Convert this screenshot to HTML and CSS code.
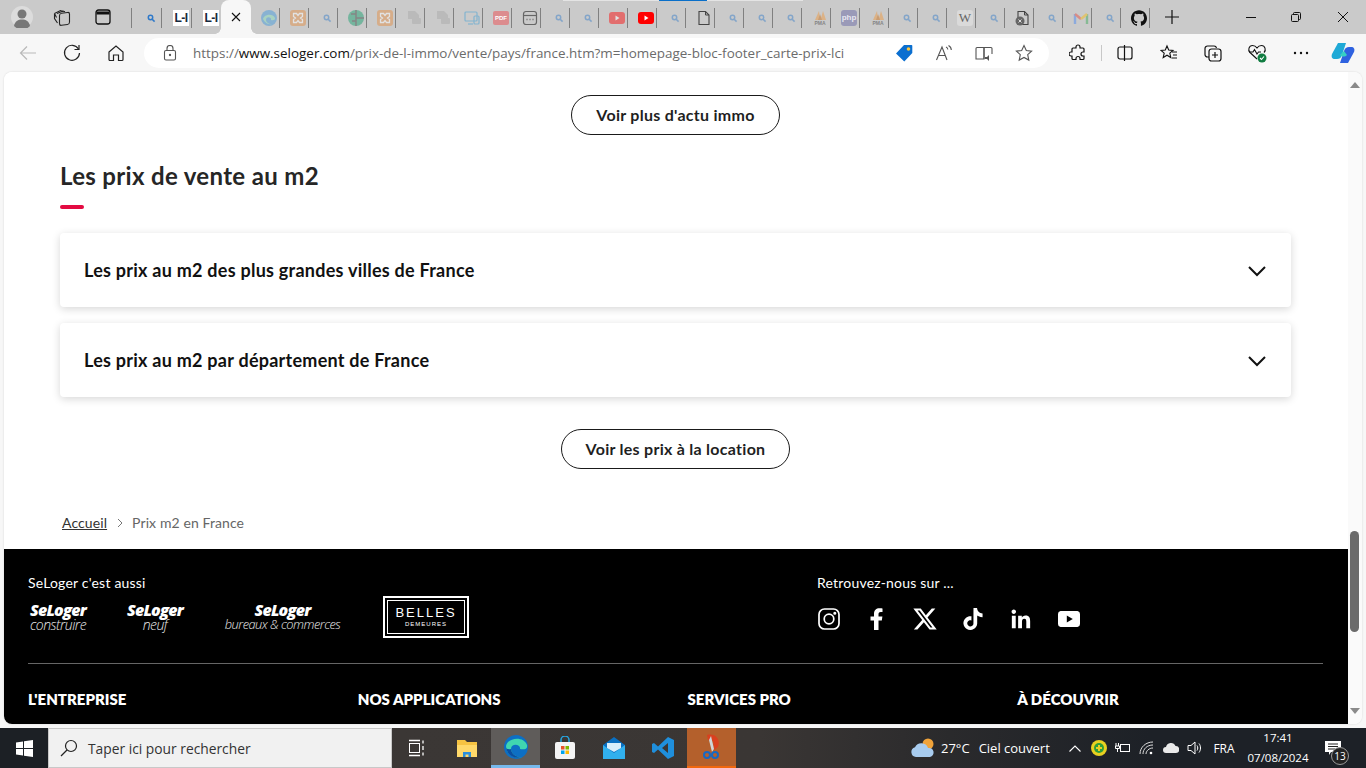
FILE: index.html
```html
<!DOCTYPE html>
<html lang="fr">
<head>
  <meta charset="UTF-8" />
  <title>Prix m2 en France</title>
  <meta name="viewport" content="width=device-width, initial-scale=1.0" />
  <link rel="stylesheet" href="styles.css">
</head>
<body>

  <svg class="defs" width="0" height="0">
    <symbol id="s" viewBox="0 0 16 16"><circle cx="7.5" cy="7.5" r="2.2" fill="none" stroke="#2f79c9" stroke-width="1.5"/><path d="M9.2 9.2l2.4 2.4" stroke="#2f79c9" stroke-width="1.6"/></symbol>
    <symbol id="xampp" viewBox="0 0 16 16"><rect width="16" height="16" rx="3" fill="#e58a3c"/><path d="M3.5 3.5h3l1.5 2 1.5-2h3v3l-2 1.5 2 1.5v3h-3L8 10.500l-1.500 2h-3v-3l2-1.500-2-1.500z" fill="none" stroke="#fff" stroke-width="1.300"/></symbol>
    <symbol id="file" viewBox="0 0 16 16"><path d="M3 1.500h6.500L13 5v9.500H3z" fill="none" stroke="#444" stroke-width="1.100"/><path d="M9.500 1.500V5H13" fill="none" stroke="#444" stroke-width="1"/></symbol>
    <symbol id="filegray" viewBox="0 0 16 16"><path d="M2 1h7l4 4v4H2z" fill="#8d8d8d"/><rect x="6" y="8" width="9" height="6" rx="1" fill="#8d8d8d"/></symbol>
    <symbol id="pma" viewBox="0 0 16 16"><path d="M3 11l4-9 1 9zM8.500 11l2.500-9 3 9z" fill="#e8a35a"/><path d="M6 11l2-6 2 6z" fill="#c9803a"/></symbol>
  </svg>

  <header class="tabbar">
    <div class="avatar">
      <svg viewBox="0 0 22 22" width="22" height="22"><circle cx="11" cy="11" r="11" fill="#dcdcdc"/><circle cx="11" cy="8" r="4.500" fill="#777"/><path d="M3 20c1-5 4-6.500 8-6.500s7 1.500 8 6.500a11 11 0 0 1-16 0z" fill="#777"/></svg>
    </div>
    <svg class="tb-workspace" viewBox="0 0 18 18" width="18" height="18" fill="none" stroke="#222" stroke-width="1.100"><path d="M1.500 5.500l6-3 3 1.200M3.500 9.500L1.500 5.500v5l3 4.500"/><path d="M4 5.500l6-2.500 2 .8"/><rect x="6.500" y="5" width="10" height="12" rx="2" transform="skewY(-8) translate(0 1.500)"/></svg>
    <svg class="tb-vertical" viewBox="0 0 18 18" width="18" height="18" fill="none" stroke="#111" stroke-width="1.300"><rect x="2" y="2" width="14" height="14" rx="2.500"/><path d="M2.500 5h13" stroke-width="3"/></svg>

    <div class="tabs">
      <div class="tab first"><svg width="16" height="16"><use href="#s"/></svg></div>
      <div class="tab first"><span class="li">L-I</span></div>
      <div class="tab first"><span class="li">L-I</span></div>
      <div class="tab-active">
        <svg viewBox="0 0 10 10" width="10" height="10" stroke="#111" stroke-width="1.100"><path d="M1 1l8 8M9 1l-8 8"/></svg>
      </div>
      <div class="tab"><svg class="faded" viewBox="0 0 16 16" width="16" height="16"><circle cx="8" cy="8" r="8" fill="#3a96dd"/><path d="M2 9c1-5 10-6 12-1 .5 2-2 2.500-4 2 1-3-5-4-5 0 0 2 3 4.500 6 4A8 8 0 0 1 2 9z" fill="#7fdcb8"/></svg></div>
      <div class="tab"><svg class="faded" width="16" height="16"><use href="#xampp"/></svg></div>
      <div class="tab"><svg class="faded" width="16" height="16"><use href="#s"/></svg></div>
      <div class="tab"><svg class="faded" viewBox="0 0 16 16" width="16" height="16"><circle cx="8" cy="8" r="8" fill="#0f9d6a"/><path d="M8 0v16M8 8h8M3 4h5M4 11h4" stroke="#333" stroke-width="1.500"/></svg></div>
      <div class="tab"><svg class="faded" width="16" height="16"><use href="#xampp"/></svg></div>
      <div class="tab"><svg class="faded light" width="16" height="16"><use href="#filegray"/></svg></div>
      <div class="tab"><svg class="faded light" width="16" height="16"><use href="#filegray"/></svg></div>
      <div class="tab"><svg class="faded" viewBox="0 0 16 16" width="16" height="16" fill="none" stroke="#2f9bd8" stroke-width="1.200"><rect x="1" y="2" width="12" height="9" rx="1"/><rect x="10" y="6" width="5" height="8" rx="1"/><path d="M4 14h5"/></svg></div>
      <div class="tab"><span class="pdf">PDF</span></div>
      <div class="tab"><svg viewBox="0 0 16 16" width="16" height="16" fill="none" stroke="#666" stroke-width="1.200"><rect x="1.500" y="1.500" width="13" height="13" rx="2.500"/><path d="M1.500 5.500h13"/><path d="M4.500 9.500h1M7.500 9.500h1M10.500 9.500h1" stroke-width="1.600"/></svg></div>
      <div class="tab"><svg class="faded" width="16" height="16"><use href="#s"/></svg></div>
      <div class="tab"><svg class="faded" width="16" height="16"><use href="#s"/></svg></div>
      <div class="tab"><svg class="faded" viewBox="0 0 16 16" width="16" height="16"><rect y="2" width="16" height="12" rx="3" fill="#f00"/><path d="M6.500 5.500v5l4-2.500z" fill="#fff"/></svg></div>
      <div class="tab"><svg viewBox="0 0 16 16" width="16" height="16"><rect y="2" width="16" height="12" rx="3" fill="#f00"/><path d="M6.500 5.500v5l4-2.500z" fill="#fff"/></svg></div>
      <div class="tab"><svg class="faded" width="16" height="16"><use href="#s"/></svg></div>
      <div class="tab"><svg width="16" height="16"><use href="#file"/></svg></div>
      <div class="tab"><svg class="faded" width="16" height="16"><use href="#s"/></svg></div>
      <div class="tab"><svg class="faded" width="16" height="16"><use href="#s"/></svg></div>
      <div class="tab"><svg class="faded" width="16" height="16"><use href="#s"/></svg></div>
      <div class="tab"><span class="pma"><svg width="16" height="11" viewBox="0 0 16 11"><use href="#pma" width="16" height="16" y="-1"/></svg><b>PMA</b></span></div>
      <div class="tab"><span class="php">php</span></div>
      <div class="tab"><span class="pma"><svg width="16" height="11" viewBox="0 0 16 11"><use href="#pma" width="16" height="16" y="-1"/></svg><b>PMA</b></span></div>
      <div class="tab"><svg class="faded" width="16" height="16"><use href="#s"/></svg></div>
      <div class="tab"><svg class="faded" width="16" height="16"><use href="#s"/></svg></div>
      <div class="tab"><span class="wiki">W</span></div>
      <div class="tab"><svg class="faded" width="16" height="16"><use href="#s"/></svg></div>
      <div class="tab"><svg viewBox="0 0 16 16" width="16" height="16"><use href="#file"/><circle cx="5" cy="11" r="4.500" fill="#666"/><path d="M3.500 9.500l3 3M6.500 9.500l-3 3" stroke="#ddd"/></svg></div>
      <div class="tab"><svg class="faded" width="16" height="16"><use href="#s"/></svg></div>
      <div class="tab"><svg class="faded" viewBox="0 0 16 16" width="16" height="16" fill="none" stroke-width="2.400"><path d="M2 14V4" stroke="#4285f4"/><path d="M14 14V4" stroke="#34a853"/><path d="M2 4l6 5" stroke="#ea4335"/><path d="M14 4L8 9" stroke="#fbbc04"/></svg></div>
      <div class="tab"><svg class="faded" width="16" height="16"><use href="#s"/></svg></div>
      <div class="tab"><svg viewBox="0 0 24 24" width="16" height="16" fill="#111"><path d="M12 .297c-6.630 0-12 5.373-12 12 0 5.303 3.438 9.800 8.205 11.385.6.113.82-.258.82-.577 0-.285-.01-1.040-.015-2.040-3.338.724-4.042-1.610-4.042-1.610C4.422 18.070 3.633 17.700 3.633 17.700c-1.087-.744.084-.729.084-.729 1.205.084 1.838 1.236 1.838 1.236 1.070 1.835 2.809 1.305 3.495.998.108-.776.417-1.305.76-1.605-2.665-.3-5.466-1.332-5.466-5.930 0-1.310.465-2.380 1.235-3.220-.135-.303-.54-1.523.105-3.176 0 0 1.005-.322 3.300 1.230.96-.267 1.980-.399 3-.405 1.020.006 2.040.138 3 .405 2.280-1.552 3.285-1.230 3.285-1.230.645 1.653.24 2.873.12 3.176.765.84 1.230 1.910 1.230 3.220 0 4.610-2.805 5.625-5.475 5.920.42.36.81 1.096.81 2.220 0 1.606-.015 2.896-.03 3.286 0 .315.21.69.825.57C20.565 22.092 24 17.592 24 12.297c0-6.627-5.373-12-12-12"/></svg></div>
    </div>

    <svg class="tb-new" viewBox="0 0 14 14" width="14" height="14" stroke="#111" stroke-width="1.200"><path d="M7 0v14M0 7h14"/></svg>

    <div class="winctl">
      <svg viewBox="0 0 10 10" width="10" height="10" stroke="#111"><path d="M0 5.500h10"/></svg>
      <svg viewBox="0 0 10 10" width="10" height="10" fill="none" stroke="#111"><rect x=".5" y="2.500" width="7" height="7" rx="1"/><path d="M2.500 2.500V1.500a1 1 0 0 1 1-1h5a1 1 0 0 1 1 1v5a1 1 0 0 1-1 1h-1"/></svg>
      <svg viewBox="0 0 10 10" width="10" height="10" stroke="#111"><path d="M0 0l10 10M10 0L0 10"/></svg>
    </div>
    <div class="loadstrip"><span></span></div>
  </header>

  <nav class="toolbar">
    <button class="tool back"><svg viewBox="0 0 18 18" width="18" height="18" fill="none" stroke="#b9b9b9" stroke-width="1.200"><path d="M17 9H1.500M8 2.500L1.500 9 8 15.500"/></svg></button>
    <button class="tool"><svg viewBox="0 0 18 18" width="18" height="18" fill="none" stroke="#222" stroke-width="1.200"><path d="M15.500 5A7.500 7.500 0 1 0 16.500 9"/><path d="M16 1v4.500h-4.500"/></svg></button>
    <button class="tool"><svg viewBox="0 0 18 18" width="18" height="18" fill="none" stroke="#222" stroke-width="1.200"><path d="M2 8l7-6 7 6v7.500a1 1 0 0 1-1 1h-3.500V11h-5v5.500H3a1 1 0 0 1-1-1z"/></svg></button>

    <div class="address">
      <svg class="lock" viewBox="0 0 14 16" width="14" height="16" fill="none" stroke="#555" stroke-width="1.100"><rect x="1.500" y="5.500" width="11" height="9.500" rx="1.500"/><path d="M4 5.500V3.500a3 3 0 0 1 6 0v2"/><circle cx="7" cy="10" r=".6" fill="#555"/></svg>
      <div class="url">https://<span class="host">www.seloger.com</span>/prix-de-l-immo/vente/pays/france.htm?m=homepage-bloc-footer_carte-prix-lci</div>
      <div class="addr-icons">
        <svg viewBox="0 0 18 18" width="18" height="18"><path d="M9 1h7.500a.8.800 0 0 1 .8.800V9l-8 8.500L1 9.500z" fill="#0b6fd0"/><circle cx="13.500" cy="5" r="1.800" fill="#ffc83d"/></svg>
        <svg viewBox="0 0 18 18" width="18" height="18" fill="none" stroke="#555" stroke-width="1.100"><path d="M1.500 16L7 3l5 13M3.500 11.500h7"/><path d="M11 3c1.300.5 1.800 1.500 1.800 2.500M13.500 1.500c1.800 1 2.800 2.500 2.800 4.500"/></svg>
        <svg viewBox="0 0 18 18" width="18" height="18" fill="none" stroke="#555" stroke-width="1.100"><path d="M9 3.500H2a1 1 0 0 0-1 1V15h8zM9 3.500h7a1 1 0 0 1 1 1V10"/><path d="M9 4v11"/><path d="M10 13h2l2-2v6l-2-2h-2z" fill="#555" stroke="none"/></svg>
        <svg viewBox="0 0 18 18" width="18" height="18" fill="none" stroke="#555" stroke-width="1.100"><path d="M9 1.500l2.300 5 5.300.6-3.900 3.600 1.100 5.400L9 13.400l-4.800 2.700 1.100-5.400L1.400 7.100l5.300-.6z"/></svg>
      </div>
    </div>

    <div class="tools-right">
      <svg viewBox="0 0 18 18" width="18" height="18" fill="none" stroke="#111" stroke-width="1.200"><path d="M7 3a2 2 0 0 1 4 0v1h3a1 1 0 0 1 1 1v3h-1a2 2 0 0 0 0 4h1v2.500a1 1 0 0 1-1 1h-3v-1a2 2 0 0 0-4 0v1H4a1 1 0 0 1-1-1V12H2a2 2 0 0 1 0-4h1V5a1 1 0 0 1 1-1h3z"/></svg>
      <span class="tool-sep"></span>
      <svg viewBox="0 0 18 18" width="18" height="18" fill="none" stroke="#111" stroke-width="1.200"><rect x="2" y="3" width="14" height="12" rx="2"/><path d="M8.500 1v16"/></svg>
      <svg viewBox="0 0 18 18" width="18" height="18" fill="none" stroke="#111" stroke-width="1.100"><path d="M7 2l1.700 4 4.300.4-3.200 2.800 1 4.300L7 11.200l-3.800 2.300 1-4.300L1 6.400 5.300 6z"/><path d="M12 8h5M13 11h4M12 14h5"/></svg>
      <svg viewBox="0 0 18 18" width="18" height="18" fill="none" stroke="#111" stroke-width="1.200"><path d="M5 13H3.500A2.500 2.500 0 0 1 1 10.500v-6A2.500 2.500 0 0 1 3.500 2H10a2.500 2.500 0 0 1 2.500 2"/><rect x="5" y="5" width="12" height="12" rx="2.500"/><path d="M11 8v6M8 11h6"/></svg>
      <svg viewBox="0 0 20 20" width="20" height="20" fill="none"><path d="M10 16L3 9.500C.5 7 2 2.500 5.500 2.500 7.500 2.500 9 3.500 10 5c1-1.500 2.500-2.500 4.500-2.500C18 2.500 19.500 7 17 9.500" stroke="#111" stroke-width="1.100"/><path d="M2 9h4l1.500-2.500L10 11l1.500-2H14" stroke="#111" stroke-width="1.100"/><circle cx="15" cy="15" r="4.500" fill="#107c41"/><path d="M13 15l1.500 1.500 2.500-3" stroke="#fff" stroke-width="1.100"/></svg>
      <svg viewBox="0 0 18 18" width="18" height="18" fill="#111"><circle cx="3" cy="9" r="1.200"/><circle cx="9" cy="9" r="1.200"/><circle cx="15" cy="9" r="1.200"/></svg>
    </div>
    <svg class="copilot" viewBox="0 0 24 24" width="24" height="24"><path d="M7 2h8l-4 12c-1 3-2.500 4-5 4H4C1 18 0 16 1 13z" fill="#1fa9d6"/><path d="M17 22H9l4-12c1-3 2.500-4 5-4h2c3 0 4 2 3 5z" fill="#2f62e0"/><path d="M9 14l4-4 3 4c-2 2-5 2-7 0z" fill="#36d1c4"/></svg>
  </nav>

  <div class="viewport">
    <div class="frame">
      <main class="page">
        <section class="content">
          <div class="btn-row top"><a class="btn actu">Voir plus d'actu immo</a></div>

          <h2 class="title">Les prix de vente au m2</h2>
          <div class="title-bar"></div>

          <div class="card">
            <span>Les prix au m2 des plus grandes villes de France</span>
            <svg viewBox="0 0 18 11" width="18" height="11" fill="none" stroke="#111" stroke-width="2"><path d="M1 1l8 8 8-8"/></svg>
          </div>
          <div class="card">
            <span>Les prix au m2 par département de France</span>
            <svg viewBox="0 0 18 11" width="18" height="11" fill="none" stroke="#111" stroke-width="2"><path d="M1 1l8 8 8-8"/></svg>
          </div>

          <div class="btn-row bottom"><a class="btn loc">Voir les prix à la location</a></div>

          <div class="crumbs">
            <a>Accueil</a>
            <svg viewBox="0 0 6 10" width="6" height="10" fill="none" stroke="#777"><path d="M1 1l4 4-4 4"/></svg>
            <span>Prix m2 en France</span>
          </div>
        </section>

        <footer class="site-footer">
          <div class="foot-top">
            <div>
              <p class="foot-label">SeLoger c'est aussi</p>
              <div class="brands">
                <div class="brand b1"><b>SeLoger</b><i>construire</i></div>
                <div class="brand b2"><b>SeLoger</b><i>neuf</i></div>
                <div class="brand b3"><b>SeLoger</b><i>bureaux &amp; commerces</i></div>
                <div class="belles"><div class="belles-in"><span class="b-big">BELLES</span><span class="b-small">DEMEURES</span></div></div>
              </div>
            </div>
            <div>
              <p class="foot-label">Retrouvez-nous sur ...</p>
              <div class="socials">
                <svg viewBox="0 0 24 24" width="24" height="24" fill="none" stroke="#fff" stroke-width="1.700"><rect x="2" y="2" width="20" height="20" rx="5.500"/><circle cx="12" cy="12" r="4.800"/><circle cx="17.800" cy="6.200" r=".7" fill="#fff"/></svg>
                <svg viewBox="0 0 24 24" width="24" height="24" fill="#fff"><path d="M9 23v-9.500H5.500V9.500H9V7c0-3.800 2.200-5.800 5.500-5.800 1.500 0 3 .2 3 .2v3.500h-1.800c-1.800 0-2.200 1.100-2.200 2.200v2.400h3.900l-.6 4h-3.300V23z"/></svg>
                <svg viewBox="0 0 24 24" width="26" height="26" fill="#fff"><path d="M18.244 2.250h3.308l-7.227 8.260 8.502 11.240H16.170l-5.214-6.817L4.990 21.750H1.680l7.730-8.835L1.254 2.250H8.080l4.713 6.231zm-1.161 17.520h1.833L7.084 4.126H5.117z"/></svg>
                <svg viewBox="0 0 24 24" width="22" height="24" fill="#fff"><path d="M12.525.02c1.310-.02 2.610-.01 3.910-.02.08 1.530.63 3.090 1.750 4.170 1.120 1.110 2.700 1.620 4.240 1.790v4.030c-1.440-.05-2.890-.35-4.200-.97-.57-.26-1.100-.59-1.620-.93-.01 2.920.01 5.840-.02 8.750-.08 1.400-.54 2.790-1.350 3.940-1.310 1.920-3.580 3.170-5.910 3.210-1.430.08-2.860-.31-4.080-1.030-2.020-1.190-3.440-3.370-3.650-5.710-.02-.5-.03-1-.01-1.490.18-1.900 1.120-3.720 2.580-4.960 1.660-1.440 3.980-2.130 6.150-1.720.02 1.480-.04 2.960-.04 4.440-.99-.32-2.150-.23-3.020.37-.63.41-1.110 1.040-1.360 1.750-.21.51-.15 1.070-.14 1.610.24 1.640 1.820 3.020 3.500 2.870 1.120-.01 2.190-.66 2.770-1.610.19-.33.4-.67.41-1.060.1-1.790.06-3.570.07-5.360.01-4.030-.01-8.050.02-12.070z"/></svg>
                <svg viewBox="0 0 24 24" width="26" height="26" fill="#fff"><path d="M20.447 20.452h-3.554v-5.569c0-1.328-.027-3.037-1.852-3.037-1.853 0-2.136 1.445-2.136 2.939v5.667H9.351V9h3.414v1.561h.046c.477-.9 1.637-1.850 3.370-1.850 3.601 0 4.267 2.370 4.267 5.455v6.286zM5.337 7.433c-1.144 0-2.063-.926-2.063-2.065 0-1.138.92-2.063 2.063-2.063 1.140 0 2.064.925 2.064 2.063 0 1.139-.925 2.065-2.064 2.065zm1.782 13.019H3.555V9h3.564v11.452z"/></svg>
                <svg viewBox="0 0 24 24" width="24" height="24"><path d="M3.500 4h17A3 3 0 0 1 23 7v10a3 3 0 0 1-2.500 3h-17A3 3 0 0 1 1 17V7a3 3 0 0 1 2.500-3z" fill="#fff"/><path d="M9.800 8.500v7l6-3.500z" fill="#000"/></svg>
              </div>
            </div>
          </div>
          <div class="foot-cols">
            <h3>L'ENTREPRISE</h3>
            <h3>NOS APPLICATIONS</h3>
            <h3>SERVICES PRO</h3>
            <h3>À DÉCOUVRIR</h3>
          </div>
        </footer>
      </main>

      <aside class="scrollbar">
        <span class="arrow up"></span>
        <span class="thumb"></span>
        <span class="arrow down"></span>
      </aside>
    </div>
  </div>

  <footer class="taskbar">
    <div class="start">
      <svg viewBox="0 0 17 17" width="17" height="17" fill="#fff"><path d="M0 2.400l7-1v6.700H0zM8 1.300L17 0v8.100H8zM0 9h7v6.600l-7-1zM8 9h9v8l-9-1.300z"/></svg>
    </div>
    <div class="search">
      <svg viewBox="0 0 18 18" width="18" height="18" fill="none" stroke="#222" stroke-width="1.200"><circle cx="11" cy="7" r="5.500"/><path d="M7 11l-6 6"/></svg>
      <span>Taper ici pour rechercher</span>
    </div>
    <div class="apps">
      <div class="app first-app"><svg viewBox="0 0 18 18" width="18" height="18" fill="none" stroke="#fff"><rect x="1.500" y="4.500" width="10" height="9"/><path d="M1 1.500h11M1 16.500h11M15 1.500v3M15 7v4M15 13.500v3" stroke-width="1.300"/></svg></div>
      <div class="app"><svg viewBox="0 0 22 22" width="22" height="22"><path d="M1 3h8l2 2h10v15H1z" fill="#f6c342"/><path d="M1 8h20v12H1z" fill="#ffd96a"/><path d="M7 20v-5h8v5h-2.500v-2.500h-3V20z" fill="#2b8fdc"/></svg></div>
      <div class="app on"><svg viewBox="0 0 24 24" width="24" height="24"><circle cx="12" cy="12" r="12" fill="#0d6fc4"/><path d="M2 11C4 2 20 1 23 10c1 4-3 5-7 4 1-5-9-6-9 0 0 4 5 9 11 8A12 12 0 0 1 2 11z" fill="#40d6b0"/><path d="M7 14c0 4 5 9 11 8a12 12 0 0 1-16-9c0 0 2 2 5 1z" fill="#0b4ea2"/></svg></div>
      <div class="app"><svg viewBox="0 0 22 24" width="22" height="24"><path d="M7 6V4a4 4 0 0 1 8 0v2" fill="none" stroke="#27a6e0" stroke-width="1.500"/><rect x="1" y="6" width="20" height="17" rx="2" fill="#f4f4f4"/><rect x="7" y="10" width="3.500" height="3.500" fill="#e8532a"/><rect x="11.500" y="10" width="3.500" height="3.500" fill="#7fba00"/><rect x="7" y="14.500" width="3.500" height="3.500" fill="#00a4ef"/><rect x="11.500" y="14.500" width="3.500" height="3.500" fill="#ffb900"/></svg></div>
      <div class="app"><svg viewBox="0 0 24 24" width="24" height="24"><path d="M1 9l11-8 11 8v14H1z" fill="#0a70c2"/><path d="M1 9l11 8 11-8v14H1z" fill="#31b0ee"/><path d="M5 7h14v5l-7 4-7-4z" fill="#d8eefb"/></svg></div>
      <div class="app"><svg viewBox="0 0 24 24" width="24" height="24"><path d="M17 1l6 3v16l-6 3L7 13.500 3 17l-2-1V8l2-1 4 3.500zM17 7l-6 5 6 5z" fill="#1f8fdc"/></svg></div>
      <div class="app hot"><svg viewBox="0 0 20 26" width="20" height="26"><path d="M5 1c8-2 14 4 11 12l-4 3-1-9-5-1z" fill="#d9401f"/><path d="M9 2l3 13-2 3L7 6z" fill="#cfd4d8"/><circle cx="5" cy="21" r="3" fill="none" stroke="#1668c4" stroke-width="2"/><circle cx="13" cy="21" r="3" fill="none" stroke="#1668c4" stroke-width="2"/></svg></div>
    </div>

    <div class="tray">
      <div class="weather">
        <svg viewBox="0 0 26 22" width="26" height="22"><circle cx="18" cy="7" r="5.500" fill="#f0a33a"/><path d="M6 20a5 5 0 0 1-1-9.800A7 7 0 0 1 18 11a4.500 4.500 0 0 1 2 9z" fill="#a8ccef"/></svg>
        <span>27°C</span>
        <span class="weather-txt">Ciel couvert</span>
      </div>
      <svg class="tray-chev" viewBox="0 0 12 7" width="12" height="7" fill="none" stroke="#fff" stroke-width="1.100"><path d="M.5 6.500L6 1l5.500 5.500"/></svg>
      <svg class="tray-i" viewBox="0 0 16 16" width="16" height="16"><circle cx="8" cy="8" r="8" fill="#e8d020"/><circle cx="8" cy="8" r="5" fill="#2e9d3a"/><path d="M8 5v6M5 8h6" stroke="#e8d020" stroke-width="2"/></svg>
      <svg class="tray-i" viewBox="0 0 16 16" width="16" height="16" fill="none" stroke="#fff"><rect x="5.500" y="4.500" width="9" height="7"/><path d="M1 3v3M3.500 3v3M.5 6h4v2.500H.5zM2.500 8.500V12"/></svg>
      <svg class="tray-i" viewBox="0 0 16 16" width="16" height="16" fill="none" stroke="#ddd"><path d="M1 14C1 7 7 2 14 2M4 14c0-5 4-9 10-9M7 14c0-3 3-6 7-6"/><circle cx="12" cy="13" r="1.300" fill="#fff" stroke="none"/></svg>
      <svg class="tray-i" viewBox="0 0 16 16" width="16" height="16"><path d="M3 13a3 3 0 0 1 0-6 5 5 0 0 1 9.500-1 3.500 3.500 0 0 1 .5 7z" fill="#e9e9e9"/></svg>
      <svg class="tray-i" viewBox="0 0 16 16" width="16" height="16" fill="none" stroke="#fff"><path d="M1 5.500h3l4-3.500v12l-4-3.500H1zM10 5.500c1 1.500 1 3.500 0 5M12 3.500c2 2.500 2 6.500 0 9"/></svg>
      <span class="lang">FRA</span>
      <div class="clock"><span>17:41</span><span>07/08/2024</span></div>
      <div class="notif">
        <svg viewBox="0 0 16 14" width="16" height="14"><path d="M0 0h16v11H6l-2 3v-3H0z" fill="#fff"/><path d="M3 3h10M3 5.500h10M3 8h7" stroke="#222"/></svg>
        <span class="notif-n">13</span>
      </div>
    </div>
  </footer>

</body>
</html>
```

FILE: styles.css
```css
* {
  box-sizing: border-box;
}

html, body {
  margin: 0;
  height: 100%;
}

body {
  width: 1366px;
  height: 768px;
  overflow: hidden;
  display: flex;
  flex-direction: column;
  background: #f7f7f7;
  font-family: "Lato", "Noto Sans", sans-serif;
}

.defs {
  position: absolute;
}

svg {
  display: block;
  flex: none;
}

/* tab strip */
.tabbar {
  position: relative;
  height: 34px;
  flex: none;
  display: flex;
  align-items: center;
  background: #cacaca;
  padding-left: 11px;
}

.avatar {
  width: 22px;
  height: 22px;
}

.tb-workspace {
  margin-left: 20px;
}

.tb-vertical {
  margin-left: 23px;
}

.tabs {
  display: flex;
  align-items: center;
  height: 34px;
  margin-left: 20px;
}

.tab {
  width: 29px;
  height: 20px;
  margin-top: 1px;
  border-right: 1px solid #808080;
  display: flex;
  align-items: center;
  justify-content: flex-end;
  padding-right: 2px;
}

.tab.first {
  width: 30px;
}

.tabs .tab.first:first-child {
  box-shadow: -1px 0 0 #808080;
}

.tab-active {
  position: relative;
  width: 30px;
  height: 34px;
  margin-left: -1px;
  background: #f7f7f7;
  border-radius: 8px 8px 0 0;
  display: flex;
  align-items: center;
  justify-content: center;
}

.tab-active::before,
.tab-active::after {
  content: "";
  position: absolute;
  bottom: 0;
  width: 6px;
  height: 6px;
}

.tab-active::before {
  left: -6px;
  background: radial-gradient(circle at 0 0, transparent 5.500px, #f7f7f7 6px);
}

.tab-active::after {
  right: -6px;
  background: radial-gradient(circle at 100% 0, transparent 5.500px, #f7f7f7 6px);
}

.faded {
  opacity: 0.45;
}

.faded.light {
  opacity: 0.25;
}

.li {
  width: 16px;
  height: 16px;
  background: #fff;
  color: #16293d;
  font: bold 12px/16px "Liberation Sans", sans-serif;
  letter-spacing: -0.5px;
  text-align: center;
}

.pdf {
  width: 16px;
  height: 14px;
  background: #dc8c8e;
  color: #fff;
  font: bold 6px/14px "Liberation Sans", sans-serif;
  text-align: center;
  border-radius: 2px;
}

.pma {
  width: 16px;
  display: flex;
  flex-direction: column;
  align-items: center;
  opacity: 0.6;
}

.pma b {
  font: bold 5px/5px "Liberation Sans", sans-serif;
  color: #555;
}

.php {
  width: 16px;
  height: 16px;
  background: #9a9ab8;
  color: #e8e8f0;
  border-radius: 3px;
  font: bold 8px/15px "Liberation Sans", sans-serif;
  text-align: center;
}

.wiki {
  width: 16px;
  height: 16px;
  background: #dadada;
  color: #666;
  border-radius: 3px;
  font: 13px/16px "Liberation Serif", serif;
  text-align: center;
}

.tb-new {
  margin-left: 15px;
}

.winctl {
  display: flex;
  align-items: center;
  margin-left: 67px;
}

.winctl svg:nth-child(2) {
  margin-left: 35px;
}

.winctl svg:nth-child(3) {
  margin-left: 37px;
}

.loadstrip {
  position: absolute;
  top: 0;
  left: 563px;
  width: 240px;
  height: 1px;
  background: #e4e4e4;
}

.loadstrip span {
  display: block;
  width: 48px;
  height: 1px;
  margin-left: 96px;
  background: #0a6fc9;
}

/* address row */
.toolbar {
  height: 38px;
  flex: none;
  display: flex;
  align-items: center;
  background: #f7f7f7;
  padding-left: 6px;
}

.tool {
  width: 44px;
  height: 30px;
  padding: 0;
  border: 0;
  background: none;
  display: flex;
  align-items: center;
  justify-content: center;
}

.address {
  width: 905px;
  height: 30px;
  margin-left: 6px;
  background: #fff;
  border-radius: 15px;
  display: flex;
  align-items: center;
  padding-left: 19px;
}

.lock {
  margin-right: 16px;
}

.url {
  width: 651px;
  font: 13.450px "Open Sans", sans-serif;
  color: #6b6b6b;
  white-space: nowrap;
}

.host {
  color: #111;
}

.addr-icons {
  display: flex;
  align-items: center;
  gap: 22px;
  margin-left: 51px;
}

.tools-right {
  display: flex;
  align-items: center;
  margin-left: 20px;
}

.tool-sep {
  width: 1px;
  height: 16px;
  background: #c8c8c8;
  margin: 0 14px;
}

.tools-right svg:nth-child(4),
.tools-right svg:nth-child(5) {
  margin-left: 26px;
}

.tools-right svg:nth-child(6) {
  margin-left: 25px;
}

.tools-right svg:nth-child(7) {
  margin-left: 25px;
}

.copilot {
  margin-left: 21px;
}

/* page area */
.viewport {
  height: 656px;
  flex: none;
  padding: 0 4px 4px;
  background: #f7f7f7;
}

.frame {
  height: 652px;
  display: flex;
  background: #fff;
  border-radius: 8px;
  overflow: hidden;
  box-shadow: 0 0 2px rgba(0, 0, 0, 0.15);
}

.page {
  width: 1344px;
  background: #fff;
  display: flex;
  flex-direction: column;
}

.content {
  padding: 23px 57px 0 56px;
  height: 477px;
}

.btn-row {
  display: flex;
  justify-content: center;
}

.btn {
  height: 40px;
  padding-bottom: 2px;
  border: 1px solid #1a1a1a;
  border-radius: 20px;
  display: flex;
  align-items: center;
  justify-content: center;
  font-size: 16px;
  font-weight: 700;
  letter-spacing: 0.27px;
  color: #1f1f1f;
}

.btn.actu {
  width: 209px;
}

.btn.loc {
  width: 229px;
}

.title {
  margin: 24px 0 0;
  font-size: 24px;
  line-height: 34px;
  font-weight: 700;
  letter-spacing: 0.33px;
  color: #262626;
}

.title-bar {
  width: 24px;
  height: 4px;
  margin-top: 12px;
  background: #e30b42;
  border-radius: 2px;
}

.card {
  height: 74px;
  margin-top: 16px;
  padding: 0 25px 0 24px;
  display: flex;
  align-items: center;
  justify-content: space-between;
  background: #fff;
  border-radius: 4px;
  box-shadow: 0 2px 8px rgba(0, 0, 0, 0.16);
  font-size: 18px;
  font-weight: 700;
  letter-spacing: 0.25px;
  color: #111;
}

.card svg {
  margin-top: 2px;
}

.title-bar + .card {
  margin-top: 24px;
}

.btn-row.bottom {
  margin-top: 32px;
}

.crumbs {
  display: flex;
  align-items: center;
  margin-top: 45px;
  margin-left: 2px;
  font-size: 14px;
  line-height: 18px;
  letter-spacing: 0.1px;
  color: #666;
}

.crumbs a {
  color: #333;
  text-decoration: underline;
}

.crumbs svg {
  margin: 0 9px 0 10px;
}

/* footer */
.site-footer {
  flex: 1;
  background: #000;
  color: #fff;
  padding: 25px 25px 0 24px;
  overflow: hidden;
}

.foot-top {
  display: grid;
  grid-template-columns: 789px 1fr;
  height: 90px;
  border-bottom: 1px solid #666;
}

.foot-label {
  margin: 0;
  font-size: 14px;
  line-height: 18px;
  letter-spacing: 0.2px;
}

.brands {
  display: flex;
  align-items: center;
  gap: 42px;
  margin-top: 4px;
  padding-left: 2px;
}

.brand {
  display: flex;
  flex-direction: column;
  align-items: center;
  white-space: nowrap;
}

.brand b {
  font: italic 800 16px/15px "Open Sans", sans-serif;
  letter-spacing: -0.8px;
}

.brand i {
  font: italic 300 14px/13px "Open Sans", sans-serif;
  letter-spacing: -0.5px;
  color: #e8e8e8;
}

.b1 {
  width: 56px;
}

.b2 {
  width: 54px;
}

.b3 {
  width: 117px;
}

.b3 i {
  font-size: 12.800px;
}

.belles {
  width: 86px;
  height: 42px;
  padding: 2px;
  border: 2px solid #fff;
}

.belles-in {
  height: 100%;
  border: 1px solid #fff;
  display: flex;
  flex-direction: column;
  align-items: center;
  justify-content: center;
}

.b-big {
  font: 13px/14px "Liberation Sans", sans-serif;
  letter-spacing: 2px;
}

.b-small {
  font: 6px/8px "Liberation Sans", sans-serif;
  letter-spacing: 1px;
}

.socials {
  display: flex;
  align-items: center;
  gap: 24px;
  margin-top: 11px;
  height: 32px;
}

.socials svg:nth-child(3),
.socials svg:nth-child(5) {
  margin: 0 -1px;
}

.socials svg:nth-child(4) {
  margin: 0 1px;
}

.foot-cols {
  display: grid;
  grid-template-columns: repeat(4, 1fr);
  column-gap: 24px;
  margin-top: 25px;
}

.foot-cols h3 {
  margin: 0;
  font-size: 15px;
  line-height: 20px;
  font-weight: 800;
}

/* fake scrollbar */
.scrollbar {
  width: 14px;
  background: #fafafa;
  display: flex;
  flex-direction: column;
  align-items: center;
}

.arrow {
  width: 0;
  height: 0;
  border-left: 5px solid transparent;
  border-right: 5px solid transparent;
}

.arrow.up {
  margin-top: 10px;
  border-bottom: 6px solid #8a8a8a;
}

.thumb {
  width: 9px;
  height: 101px;
  margin-top: 443px;
  margin-right: 2px;
  background: #6a6a6a;
  border-radius: 5px;
}

.arrow.down {
  margin-top: 76px;
  border-top: 6px solid #8a8a8a;
}

/* windows taskbar */
.taskbar {
  height: 40px;
  flex: none;
  display: flex;
  align-items: center;
  background: linear-gradient(90deg, #1c2025 0, #3b3735 400px, #3a3634 760px, #2a2a2c 950px, #1d2127 1150px);
  color: #fff;
}

.start {
  width: 48px;
  height: 40px;
  background: #1c2025;
  display: flex;
  align-items: center;
  justify-content: center;
}

.search {
  width: 344px;
  height: 40px;
  background: #f1f1f1;
  border: 1px solid #c8c8c8;
  display: flex;
  align-items: center;
  gap: 10px;
  padding-left: 11px;
  font: 13.800px "Open Sans", sans-serif;
  color: #333;
}

.apps {
  display: flex;
  height: 40px;
  width: 345px;
}

.app {
  width: 49px;
  height: 40px;
  display: flex;
  align-items: center;
  justify-content: center;
}

.app.first-app {
  width: 50px;
}

.app.on {
  background: #5f5c5a;
  border-bottom: 3px solid #76b9ed;
}

.app.hot {
  background: #b4602c;
  border-bottom: 2px solid #f0670f;
}

.tray {
  display: flex;
  align-items: center;
  height: 40px;
  font: 13px "Open Sans", sans-serif;
  margin-left: 173px;
  white-space: nowrap;
}

.weather {
  width: 143px;
  display: flex;
  align-items: center;
}

.weather span {
  margin-left: 5px;
}

.weather .weather-txt {
  margin-left: 9px;
}

.tray-chev {
  margin-left: 16px;
}

.tray-i {
  margin-left: 8px;
}

.tray-chev + .tray-i {
  margin-left: 10px;
}

.lang {
  width: 24px;
  margin-left: 9px;
  font-size: 12px;
  text-align: center;
}

.clock {
  width: 60px;
  margin-left: 12px;
  display: flex;
  flex-direction: column;
  align-items: center;
  font-size: 11.500px;
  line-height: 20px;
}

.notif {
  position: relative;
  margin-left: 17px;
}

.notif-n {
  position: absolute;
  top: 6px;
  left: 6px;
  width: 18px;
  height: 18px;
  border: 1px solid #999;
  border-radius: 50%;
  background: #222;
  font-size: 10px;
  line-height: 16px;
  text-align: center;
}
```
